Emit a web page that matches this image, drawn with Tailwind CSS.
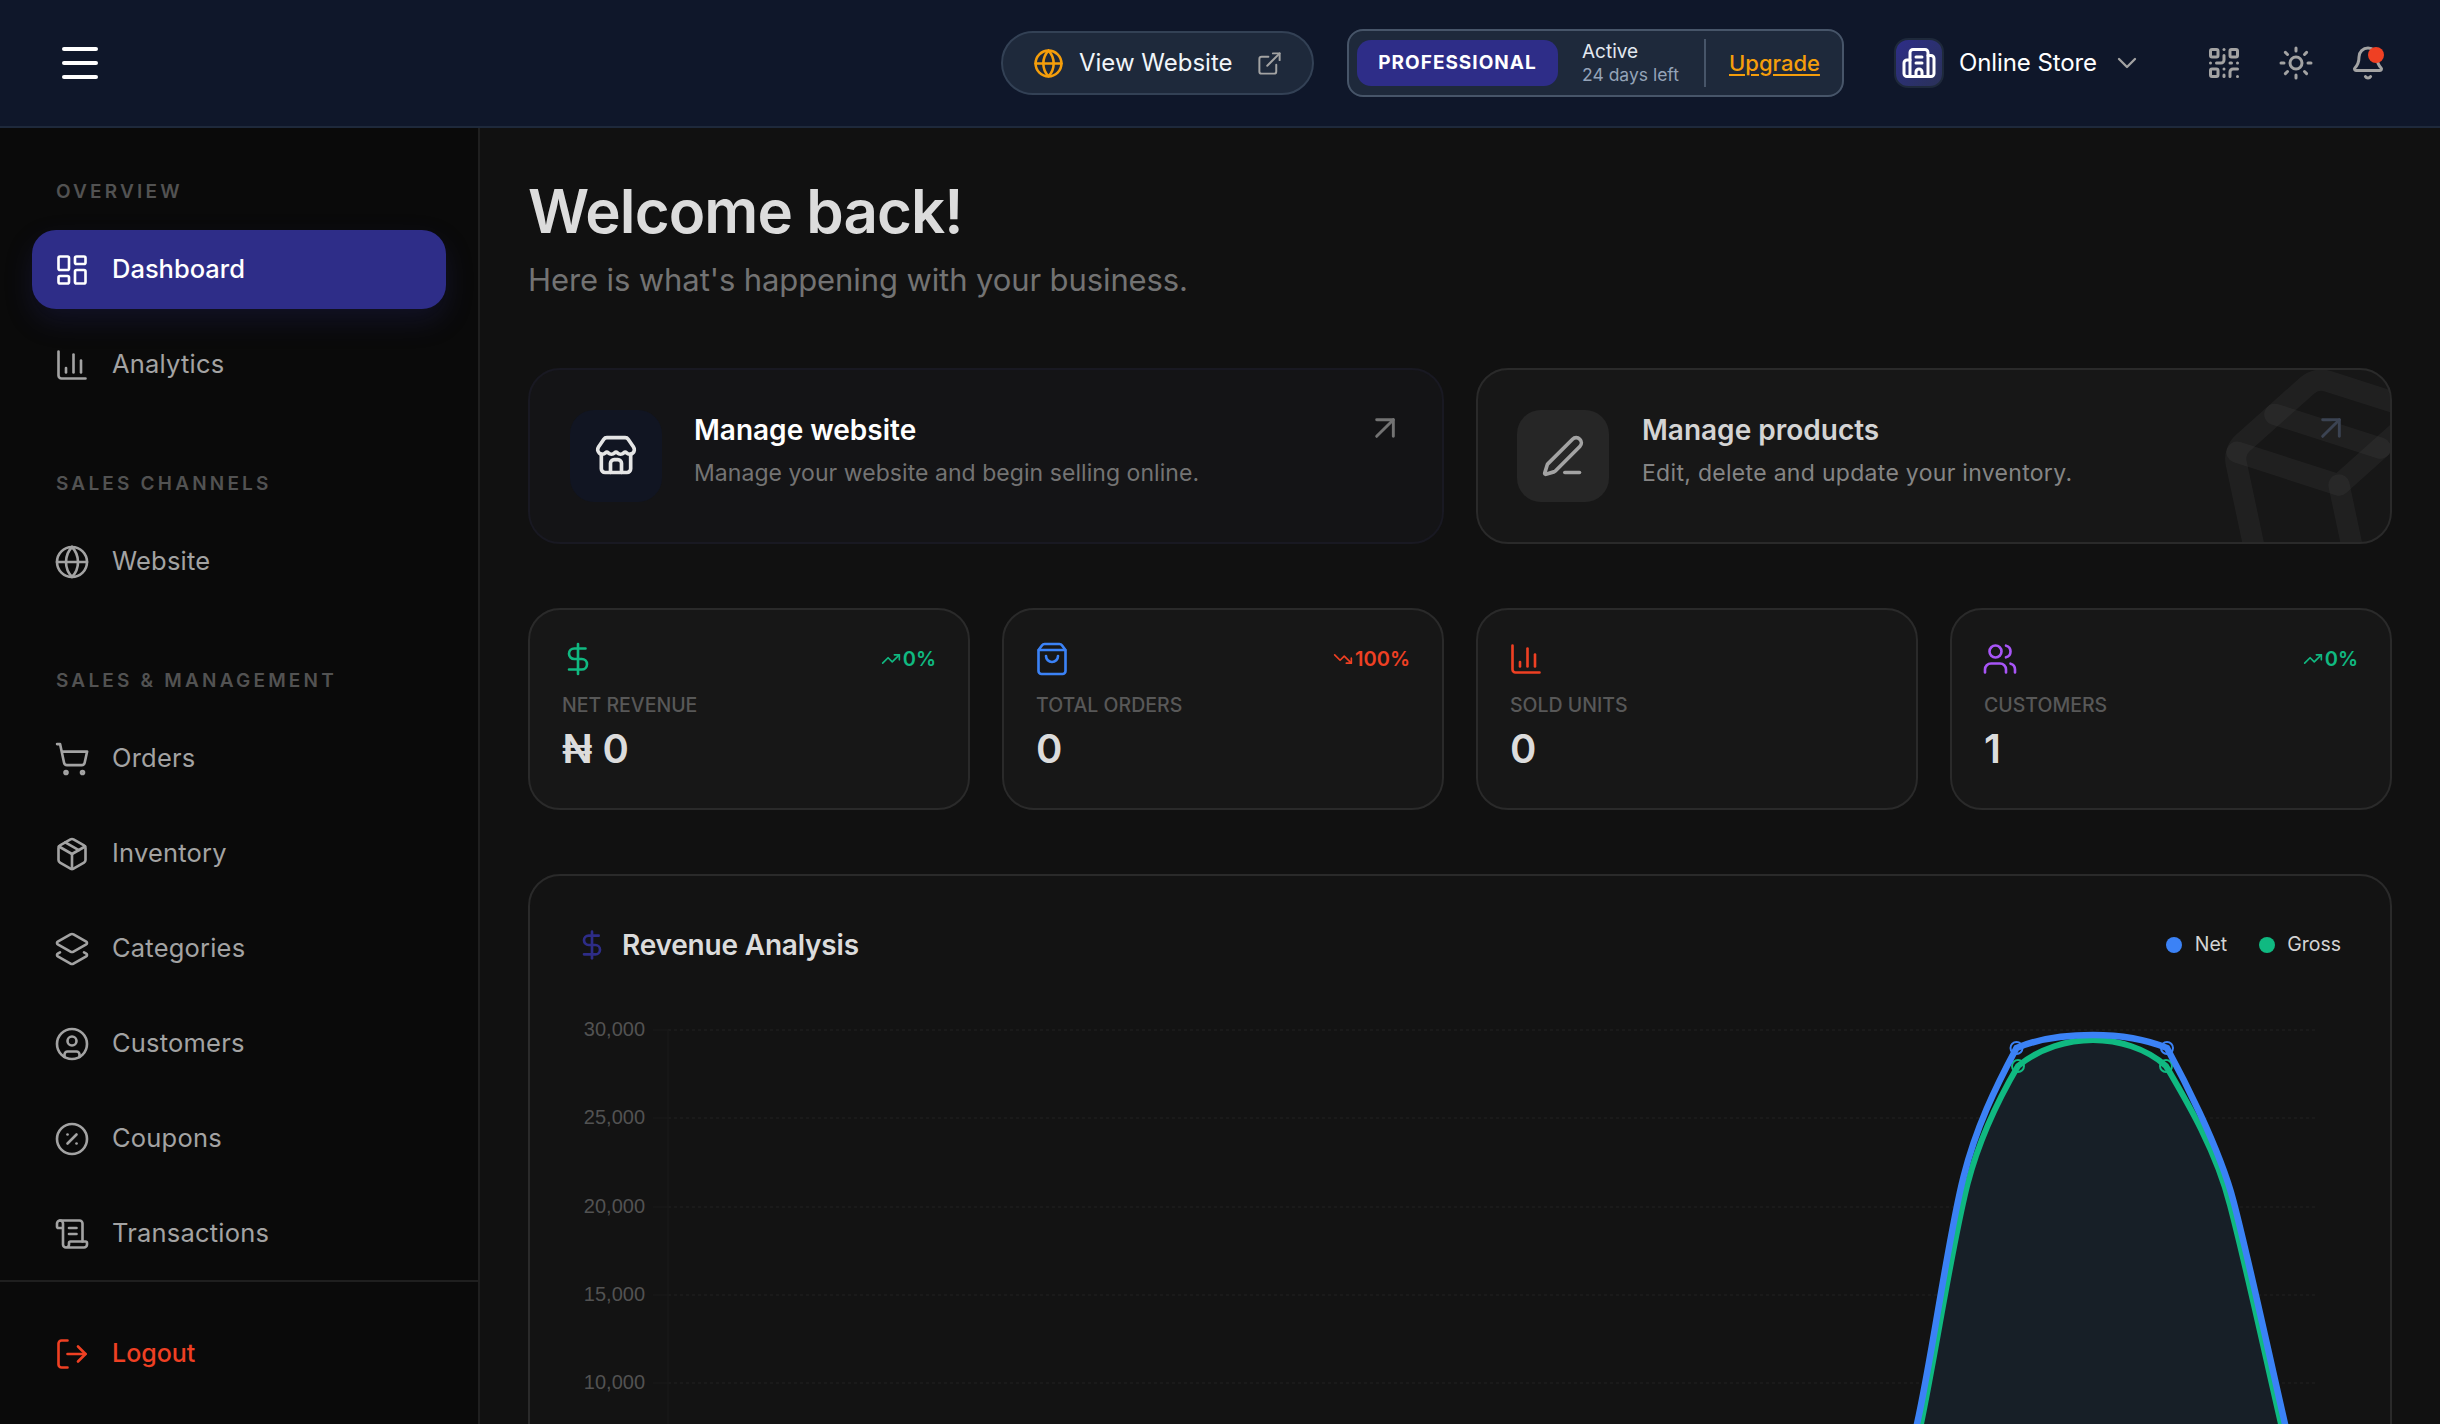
<!DOCTYPE html>
<html lang="en">
<head>
<meta charset="utf-8">
<title>Dashboard</title>
<script src="https://cdn.jsdelivr.net/npm/@tailwindcss/browser@4"></script>
</head>
<body class="h-[1424px] overflow-hidden bg-[#111111] font-['Inter',sans-serif]">

<!-- top bar -->
<header class="flex h-[128px] items-center border-b-2 border-[#1e293b] bg-[#0f172a] pl-[62px] pr-[54px]">
  <button class="flex h-[32px] w-[36px] flex-col justify-between">
    <span class="block h-[4px] w-full rounded-full bg-white"></span>
    <span class="block h-[4px] w-full rounded-full bg-white"></span>
    <span class="block h-[4px] w-full rounded-full bg-white"></span>
  </button>

  <a class="ml-auto flex h-[64px] w-[313px] items-center rounded-full border-2 border-[#334155] bg-[#1e293b] pl-[30px] text-[24px] text-[#f1f5f9]">
    <svg class="h-[31px] w-[31px] text-[#f59e0b]" viewBox="0 0 24 24" fill="none" stroke="currentColor" stroke-width="2" stroke-linecap="round" stroke-linejoin="round"><circle cx="12" cy="12" r="10"/><path d="M12 2a14.5 14.5 0 0 0 0 20 14.5 14.5 0 0 0 0-20"/><path d="M2 12h20"/></svg>
    <span class="ml-[15px] w-[153px] whitespace-nowrap">View Website</span>
    <svg class="ml-[24px] h-[27px] w-[27px] text-[#a3a3a3]" viewBox="0 0 24 24" fill="none" stroke="currentColor" stroke-width="1.75" stroke-linecap="round" stroke-linejoin="round"><path d="M15 3h6v6"/><path d="M10 14 21 3"/><path d="M18 13v6a2 2 0 0 1-2 2H5a2 2 0 0 1-2-2V8a2 2 0 0 1 2-2h6"/></svg>
  </a>

  <div class="ml-[33px] flex h-[68px] w-[497px] items-center rounded-[16px] border-2 border-[#475569] bg-[#1e293b] pl-[8px]">
    <span class="flex h-[46px] w-[201px] items-center justify-center rounded-[14px] bg-[#2e2d88] text-[19px] font-bold tracking-[1px] text-white">PROFESSIONAL</span>
    <div class="ml-[24px] w-[122px] leading-[23px]">
      <div class="text-[19px] text-[#e2e8f0]">Active</div>
      <div class="whitespace-nowrap text-[17.5px] text-[#94a3b8]">24 days left</div>
    </div>
    <span class="h-[48px] w-[2px] bg-[#475569]"></span>
    <a class="ml-[23px] text-[22px] font-medium text-[#f59e0b] underline underline-offset-3">Upgrade</a>
  </div>

  <div class="ml-[50px] flex items-center">
    <span class="flex h-[50px] w-[50px] items-center justify-center rounded-[14px] border-2 border-[#1e293b] bg-gradient-to-br from-[#2e2d88] to-[#2a3158]">
      <svg class="h-[36px] w-[36px] shrink-0 text-white" viewBox="0 0 24 24" fill="none" stroke="currentColor" stroke-width="2" stroke-linecap="round" stroke-linejoin="round"><path d="M10 12h4"/><path d="M10 8h4"/><path d="M14 21v-3a2 2 0 0 0-4 0v3"/><path d="M6 10H4a2 2 0 0 0-2 2v7a2 2 0 0 0 2 2h16a2 2 0 0 0 2-2V9a2 2 0 0 0-2-2h-2"/><path d="M6 21V5a2 2 0 0 1 2-2h8a2 2 0 0 1 2 2v16"/></svg>
    </span>
    <span class="ml-[15px] w-[138px] whitespace-nowrap text-[24px] text-white tracking-[-0.1px]">Online Store</span>
    <svg class="ml-[14px] h-[32px] w-[32px] text-[#a3a3a3]" viewBox="0 0 24 24" fill="none" stroke="currentColor" stroke-width="1.75" stroke-linecap="round" stroke-linejoin="round"><path d="m6 9 6 6 6-6"/></svg>
  </div>

  <svg class="ml-[63px] h-[36px] w-[36px] text-[#a3a3a3]" viewBox="0 0 24 24" fill="none" stroke="currentColor" stroke-width="2" stroke-linecap="round" stroke-linejoin="round"><rect width="5" height="5" x="3" y="3" rx="1"/><rect width="5" height="5" x="16" y="3" rx="1"/><rect width="5" height="5" x="3" y="16" rx="1"/><path d="M21 16h-3a2 2 0 0 0-2 2v3"/><path d="M21 21v.01"/><path d="M12 7v3a2 2 0 0 1-2 2H7"/><path d="M3 12h.01"/><path d="M12 3h.01"/><path d="M12 16v.01"/><path d="M16 12h1"/><path d="M21 12v.01"/><path d="M12 21v-1"/></svg>
  <svg class="ml-[36px] h-[36px] w-[36px] text-[#a3a3a3]" viewBox="0 0 24 24" fill="none" stroke="currentColor" stroke-width="2" stroke-linecap="round" stroke-linejoin="round"><circle cx="12" cy="12" r="4"/><path d="M12 2v2"/><path d="M12 20v2"/><path d="m4.93 4.93 1.41 1.41"/><path d="m17.66 17.66 1.41 1.41"/><path d="M2 12h2"/><path d="M20 12h2"/><path d="m6.34 17.66-1.41 1.41"/><path d="m19.07 4.93-1.41 1.41"/></svg>
  <div class="relative ml-[36px] h-[36px] w-[36px]">
    <svg class="h-[36px] w-[36px] text-[#a3a3a3]" viewBox="0 0 24 24" fill="none" stroke="currentColor" stroke-width="2" stroke-linecap="round" stroke-linejoin="round"><path d="M10.268 21a2 2 0 0 0 3.464 0"/><path d="M3.262 15.326A1 1 0 0 0 4 17h16a1 1 0 0 0 .74-1.673C19.41 13.956 18 12.499 18 8A6 6 0 0 0 6 8c0 4.499-1.411 5.956-2.738 7.326"/></svg>
    <span class="absolute right-[2px] top-[2px] h-[16px] w-[16px] rounded-full bg-[#ef4023]"></span>
  </div>
</header>

<div class="flex h-[1296px]">
  <!-- sidebar -->
  <aside class="flex w-[480px] shrink-0 flex-col border-r-2 border-[#1f1f1f] bg-[#0a0a0a] text-[25.5px] tracking-[0.2px] text-[#a3a3a3]">
    <nav class="h-[1152px] px-[32px] pt-[49px]">
      <div class="pl-[24px] text-[19px] font-semibold leading-[30px] tracking-[3.2px] text-[#525252]">OVERVIEW</div>
      <div class="mt-[23px] flex flex-col gap-[16px]">
        <a class="flex h-[79px] items-center gap-[22px] rounded-[24px] bg-[#2e2d88] px-[22px] font-medium tracking-normal text-white shadow-[0_12px_28px_rgba(46,45,136,0.22)]">
          <svg class="h-[36px] w-[36px]" viewBox="0 0 24 24" fill="none" stroke="currentColor" stroke-width="1.75" stroke-linecap="round" stroke-linejoin="round"><rect width="7" height="9" x="3" y="3" rx="1"/><rect width="7" height="5" x="14" y="3" rx="1"/><rect width="7" height="9" x="14" y="12" rx="1"/><rect width="7" height="5" x="3" y="16" rx="1"/></svg>
          Dashboard
        </a>
        <a class="flex h-[79px] items-center gap-[22px] px-[22px]">
          <svg class="h-[36px] w-[36px]" viewBox="0 0 24 24" fill="none" stroke="currentColor" stroke-width="1.75" stroke-linecap="round" stroke-linejoin="round"><path d="M3 3v16a2 2 0 0 0 2 2h16"/><path d="M18 17V9"/><path d="M13 17V5"/><path d="M8 17v-3"/></svg>
          Analytics
        </a>
      </div>

      <div class="mt-[65px] pl-[24px] text-[19px] font-semibold leading-[30px] tracking-[3.2px] text-[#525252]">SALES CHANNELS</div>
      <div class="mt-[23px] flex flex-col gap-[16px]">
        <a class="flex h-[79px] items-center gap-[22px] px-[22px]">
          <svg class="h-[36px] w-[36px]" viewBox="0 0 24 24" fill="none" stroke="currentColor" stroke-width="1.75" stroke-linecap="round" stroke-linejoin="round"><circle cx="12" cy="12" r="10"/><path d="M12 2a14.5 14.5 0 0 0 0 20 14.5 14.5 0 0 0 0-20"/><path d="M2 12h20"/></svg>
          Website
        </a>
      </div>

      <div class="mt-[65px] pl-[24px] text-[19px] font-semibold leading-[30px] tracking-[3.2px] text-[#525252]">SALES &amp; MANAGEMENT</div>
      <div class="mt-[23px] flex flex-col gap-[16px]">
        <a class="flex h-[79px] items-center gap-[22px] px-[22px]">
          <svg class="h-[36px] w-[36px]" viewBox="0 0 24 24" fill="none" stroke="currentColor" stroke-width="1.75" stroke-linecap="round" stroke-linejoin="round"><circle cx="8" cy="21" r="1"/><circle cx="19" cy="21" r="1"/><path d="M2.05 2.05h2l2.66 12.42a2 2 0 0 0 2 1.58h9.78a2 2 0 0 0 1.95-1.57l1.65-7.43H5.12"/></svg>
          Orders
        </a>
        <a class="flex h-[79px] items-center gap-[22px] px-[22px]">
          <svg class="h-[36px] w-[36px]" viewBox="0 0 24 24" fill="none" stroke="currentColor" stroke-width="1.75" stroke-linecap="round" stroke-linejoin="round"><path d="M11 21.73a2 2 0 0 0 2 0l7-4A2 2 0 0 0 21 16V8a2 2 0 0 0-1-1.73l-7-4a2 2 0 0 0-2 0l-7 4A2 2 0 0 0 3 8v8a2 2 0 0 0 1 1.73z"/><path d="M12 22V12"/><path d="M3.29 7 12 12l8.71-5"/><path d="m7.5 4.27 9 5.15"/></svg>
          Inventory
        </a>
        <a class="flex h-[79px] items-center gap-[22px] px-[22px]">
          <svg class="h-[36px] w-[36px]" viewBox="0 0 24 24" fill="none" stroke="currentColor" stroke-width="1.75" stroke-linecap="round" stroke-linejoin="round"><path d="M13 13.74a2 2 0 0 1-2 0L2.5 8.87a1 1 0 0 1 0-1.74L11 2.26a2 2 0 0 1 2 0l8.5 4.87a1 1 0 0 1 0 1.74z"/><path d="m20 14.285 1.5.845a1 1 0 0 1 0 1.74L13 21.74a2 2 0 0 1-2 0l-8.5-4.87a1 1 0 0 1 0-1.74l1.5-.845"/></svg>
          Categories
        </a>
        <a class="flex h-[79px] items-center gap-[22px] px-[22px]">
          <svg class="h-[36px] w-[36px]" viewBox="0 0 24 24" fill="none" stroke="currentColor" stroke-width="1.75" stroke-linecap="round" stroke-linejoin="round"><circle cx="12" cy="12" r="10"/><circle cx="12" cy="10" r="3"/><path d="M7 20.662V19a2 2 0 0 1 2-2h6a2 2 0 0 1 2 2v1.662"/></svg>
          Customers
        </a>
        <a class="flex h-[79px] items-center gap-[22px] px-[22px]">
          <svg class="h-[36px] w-[36px]" viewBox="0 0 24 24" fill="none" stroke="currentColor" stroke-width="1.75" stroke-linecap="round" stroke-linejoin="round"><circle cx="12" cy="12" r="10"/><path d="m15 9-6 6"/><path d="M9 9h.01"/><path d="M15 15h.01"/></svg>
          Coupons
        </a>
        <a class="flex h-[79px] items-center gap-[22px] px-[22px]">
          <svg class="h-[36px] w-[36px]" viewBox="0 0 24 24" fill="none" stroke="currentColor" stroke-width="1.75" stroke-linecap="round" stroke-linejoin="round"><path d="M15 12h-5"/><path d="M15 8h-5"/><path d="M19 17V5a2 2 0 0 0-2-2H4"/><path d="M8 21h12a2 2 0 0 0 2-2v-1a1 1 0 0 0-1-1H11a1 1 0 0 0-1 1v1a2 2 0 1 1-4 0V5a2 2 0 1 0-4 0v2a1 1 0 0 0 1 1h3"/></svg>
          Transactions
        </a>
      </div>
    </nav>
    <div class="border-t-2 border-[#1f1f1f] px-[32px] pt-[32px]">
      <a class="flex h-[79px] items-center gap-[22px] px-[22px] text-[25px] font-medium tracking-normal text-[#ef4023]">
        <svg class="h-[36px] w-[36px]" viewBox="0 0 24 24" fill="none" stroke="currentColor" stroke-width="1.75" stroke-linecap="round" stroke-linejoin="round"><path d="M9 21H5a2 2 0 0 1-2-2V5a2 2 0 0 1 2-2h4"/><path d="m16 17 5-5-5-5"/><path d="M21 12H9"/></svg>
        Logout
      </a>
    </div>
  </aside>

  <!-- main column -->
  <main class="min-w-0 flex-1 px-[48px] pt-[48px]">
    <h1 class="mt-[-1px] text-[60px] font-semibold leading-[72px] tracking-[-0.9px] text-[#dcdcdc]">Welcome back!</h1>
    <p class="mt-[10px] text-[31px] leading-[46px] tracking-[-0.1px] text-[#737373]">Here is what's happening with your business.</p>

    <div class="mt-[65px] grid grid-cols-2 gap-[32px]">
      <a class="relative flex h-[176px] items-center overflow-hidden rounded-[32px] border-2 border-[#191922] bg-[#141416] pl-[40px]">
        <span class="flex h-[92px] w-[92px] shrink-0 items-center justify-center rounded-[24px] bg-[#111522]">
          <svg class="h-[44px] w-[44px] text-[#e5e5e5]" viewBox="0 0 24 24" fill="none" stroke="currentColor" stroke-width="2" stroke-linecap="round" stroke-linejoin="round"><path d="M15 21v-5a2 2 0 0 0-2-2h-2a2 2 0 0 0-2 2v5"/><path d="M17.774 10.31a1.12 1.12 0 0 0-1.549 0 2.5 2.5 0 0 1-3.451 0 1.12 1.12 0 0 0-1.548 0 2.5 2.5 0 0 1-3.452 0 1.12 1.12 0 0 0-1.549 0 2.5 2.5 0 0 1-3.77-3.248l2.889-4.184A2 2 0 0 1 7 2h10a2 2 0 0 1 1.653.873l2.895 4.192a2.5 2.5 0 0 1-3.774 3.244"/><path d="M4 10.95V19a2 2 0 0 0 2 2h12a2 2 0 0 0 2-2v-8.05"/></svg>
        </span>
        <div class="mb-[13px] ml-[32px]">
          <div class="text-[28px] font-semibold leading-[40px] text-white">Manage website</div>
          <div class="mt-[6px] whitespace-nowrap text-[23px] leading-[34px] tracking-[0.05px] text-[#737373]">Manage your website and begin selling online.</div>
        </div>
        <svg class="absolute right-[37px] top-[38px] h-[40px] w-[40px] text-[#737373]" viewBox="0 0 24 24" fill="none" stroke="currentColor" stroke-width="1.75" stroke-linecap="round" stroke-linejoin="round"><path d="M7 7h10v10"/><path d="M7 17 17 7"/></svg>
      </a>

      <a class="relative flex h-[176px] items-center overflow-hidden rounded-[32px] border-2 border-[#2a2a2a] bg-[#171717] pl-[39px]">
        <svg class="absolute right-[-77px] top-[-13px] h-[256px] w-[256px] -rotate-12 text-white/[0.04]" viewBox="0 0 24 24" fill="none" stroke="currentColor" stroke-width="2" stroke-linecap="round" stroke-linejoin="round"><path d="M11 21.73a2 2 0 0 0 2 0l7-4A2 2 0 0 0 21 16V8a2 2 0 0 0-1-1.73l-7-4a2 2 0 0 0-2 0l-7 4A2 2 0 0 0 3 8v8a2 2 0 0 0 1 1.73z"/><path d="M12 22V12"/><path d="M3.29 7 12 12l8.71-5"/><path d="m7.5 4.27 9 5.15"/></svg>
        <span class="relative flex h-[92px] w-[92px] shrink-0 items-center justify-center rounded-[24px] bg-[#262626]">
          <svg class="h-[44px] w-[44px] text-[#a3a3a3]" viewBox="0 0 24 24" fill="none" stroke="currentColor" stroke-width="2" stroke-linecap="round" stroke-linejoin="round"><path d="M13 21h8"/><path d="M21.174 6.812a1 1 0 0 0-3.986-3.987L3.842 16.174a2 2 0 0 0-.5.83l-1.321 4.352a.5.5 0 0 0 .623.622l4.353-1.32a2 2 0 0 0 .83-.497z"/></svg>
        </span>
        <div class="relative mb-[13px] ml-[33px]">
          <div class="text-[28px] font-semibold leading-[40px] text-[#d4d4d4]">Manage products</div>
          <div class="mt-[6px] whitespace-nowrap text-[23px] leading-[34px] tracking-[0.3px] text-[#858585]">Edit, delete and update your inventory.</div>
        </div>
        <svg class="absolute right-[39px] top-[38px] h-[40px] w-[40px] text-[#3b4352]" viewBox="0 0 24 24" fill="none" stroke="currentColor" stroke-width="1.75" stroke-linecap="round" stroke-linejoin="round"><path d="M7 7h10v10"/><path d="M7 17 17 7"/></svg>
      </a>
    </div>

    <div class="mt-[64px] grid grid-cols-4 gap-[32px]">
      <div class="h-[202px] rounded-[32px] border-2 border-[#2a2a2a] bg-[#171717] px-[32px] pt-[32px]">
        <div class="flex h-[34px] items-center justify-between">
          <svg class="ml-[-2px] h-[36px] w-[36px] text-[#10b981]" viewBox="0 0 24 24" fill="none" stroke="currentColor" stroke-width="1.75" stroke-linecap="round" stroke-linejoin="round"><path d="M12 2v20"/><path d="M17 5H9.5a3.5 3.5 0 0 0 0 7h5a3.5 3.5 0 0 1 0 7H6"/></svg>
          <span class="flex items-center gap-[2px] text-[20px] font-semibold text-[#10b981]">
            <svg class="h-[20px] w-[20px]" viewBox="0 0 24 24" fill="none" stroke="currentColor" stroke-width="2" stroke-linecap="round" stroke-linejoin="round"><path d="m22 7-8.5 8.5-5-5L2 17"/><path d="M16 7h6v6"/></svg>
            0%
          </span>
        </div>
        <div class="mt-[15px] text-[19.5px] font-medium leading-[28px] text-[#585858]">NET REVENUE</div>
        <div class="mt-[6px] text-[40px] font-semibold leading-[48px] text-[#dcdcdc]">₦ 0</div>
      </div>

      <div class="h-[202px] rounded-[32px] border-2 border-[#2a2a2a] bg-[#171717] px-[32px] pt-[32px]">
        <div class="flex h-[34px] items-center justify-between">
          <svg class="ml-[-2px] h-[36px] w-[36px] text-[#3b82f6]" viewBox="0 0 24 24" fill="none" stroke="currentColor" stroke-width="1.75" stroke-linecap="round" stroke-linejoin="round"><path d="M16 10a4 4 0 0 1-8 0"/><path d="M3.103 6.034h17.794"/><path d="M3.4 5.467a2 2 0 0 0-.4 1.2V20a2 2 0 0 0 2 2h14a2 2 0 0 0 2-2V6.667a2 2 0 0 0-.4-1.2l-2-2.667A2 2 0 0 0 17 2H7a2 2 0 0 0-1.6.8z"/></svg>
          <span class="flex items-center gap-[2px] text-[20px] font-semibold text-[#ef4023]">
            <svg class="h-[20px] w-[20px]" viewBox="0 0 24 24" fill="none" stroke="currentColor" stroke-width="2" stroke-linecap="round" stroke-linejoin="round"><path d="m22 17-8.5-8.5-5 5L2 7"/><path d="M16 17h6v-6"/></svg>
            100%
          </span>
        </div>
        <div class="mt-[15px] text-[19.5px] font-medium leading-[28px] text-[#585858]">TOTAL ORDERS</div>
        <div class="mt-[6px] text-[40px] font-semibold leading-[48px] text-[#dcdcdc]">0</div>
      </div>

      <div class="h-[202px] rounded-[32px] border-2 border-[#2a2a2a] bg-[#171717] px-[32px] pt-[32px]">
        <div class="flex h-[34px] items-center justify-between">
          <svg class="ml-[-2px] h-[36px] w-[36px] text-[#ef4023]" viewBox="0 0 24 24" fill="none" stroke="currentColor" stroke-width="1.75" stroke-linecap="round" stroke-linejoin="round"><path d="M3 3v16a2 2 0 0 0 2 2h16"/><path d="M18 17V9"/><path d="M13 17V5"/><path d="M8 17v-3"/></svg>
        </div>
        <div class="mt-[15px] text-[19.5px] font-medium leading-[28px] text-[#585858]">SOLD UNITS</div>
        <div class="mt-[6px] text-[40px] font-semibold leading-[48px] text-[#dcdcdc]">0</div>
      </div>

      <div class="h-[202px] rounded-[32px] border-2 border-[#2a2a2a] bg-[#171717] px-[32px] pt-[32px]">
        <div class="flex h-[34px] items-center justify-between">
          <svg class="ml-[-2px] h-[36px] w-[36px] text-[#a855f7]" viewBox="0 0 24 24" fill="none" stroke="currentColor" stroke-width="1.75" stroke-linecap="round" stroke-linejoin="round"><path d="M16 21v-2a4 4 0 0 0-4-4H6a4 4 0 0 0-4 4v2"/><circle cx="9" cy="7" r="4"/><path d="M22 21v-2a4 4 0 0 0-3-3.87"/><path d="M16 3.13a4 4 0 0 1 0 7.75"/></svg>
          <span class="flex items-center gap-[2px] text-[20px] font-semibold text-[#10b981]">
            <svg class="h-[20px] w-[20px]" viewBox="0 0 24 24" fill="none" stroke="currentColor" stroke-width="2" stroke-linecap="round" stroke-linejoin="round"><path d="m22 7-8.5 8.5-5-5L2 17"/><path d="M16 7h6v6"/></svg>
            0%
          </span>
        </div>
        <div class="mt-[15px] text-[19.5px] font-medium leading-[28px] text-[#585858]">CUSTOMERS</div>
        <div class="mt-[6px] text-[40px] font-semibold leading-[48px] text-[#dcdcdc]">1</div>
      </div>
    </div>

    <!-- revenue chart, runs off the bottom of the window -->
    <section class="mt-[64px] h-[640px] rounded-[32px] border-2 border-[#2a2a2a] bg-[#131313]">
      <div class="flex h-[137px] items-center justify-between pl-[46px] pr-[49px]">
        <div class="flex items-center gap-[14px]">
          <svg class="h-[32px] w-[32px] text-[#2e2d88]" viewBox="0 0 24 24" fill="none" stroke="currentColor" stroke-width="2" stroke-linecap="round" stroke-linejoin="round"><path d="M12 2v20"/><path d="M17 5H9.5a3.5 3.5 0 0 0 0 7h5a3.5 3.5 0 0 1 0 7H6"/></svg>
          <h2 class="text-[28px] font-semibold tracking-[-0.2px] text-[#dcdcdc]">Revenue Analysis</h2>
        </div>
        <div class="flex items-center text-[19.5px] text-[#d4d4d4]">
          <span class="h-[16px] w-[16px] rounded-full bg-[#3b82f6]"></span>
          <span class="ml-[13px]">Net</span>
          <span class="ml-[32px] h-[16px] w-[16px] rounded-full bg-[#10b981]"></span>
          <span class="ml-[12px]">Gross</span>
        </div>
      </div>
      <svg class="block h-[440px] w-[1860px]" viewBox="530 1013 1860 440" fill="none">
        <g stroke="#1e1e1e" stroke-width="1.5" stroke-dasharray="3 3">
          <path d="M668 1030H2317"/><path d="M668 1118H2317"/><path d="M668 1207H2317"/><path d="M668 1295H2317"/><path d="M668 1383H2317"/>
        </g>
        <g stroke="#191919" stroke-width="1.5">
          <path d="M668 1030V1453"/><path d="M653 1030H668"/><path d="M653 1118H668"/><path d="M653 1207H668"/><path d="M653 1295H668"/><path d="M653 1383H668"/>
        </g>
        <g class="font-['Liberation_Sans',sans-serif]" fill="#525252" font-size="20" text-anchor="end">
          <text x="645" y="1036">30,000</text>
          <text x="645" y="1124">25,000</text>
          <text x="645" y="1213">20,000</text>
          <text x="645" y="1301">15,000</text>
          <text x="645" y="1389">10,000</text>
        </g>
        <path fill="#171f27" d="M1915 1453L1921 1424C1936 1352 1952 1245 1967.5 1184C1979 1140 1998 1100 2018 1066C2040 1048 2068 1040 2093 1040C2118 1040 2146 1048 2166 1066C2186 1100 2216 1150 2230 1205C2245 1262 2264 1350 2281 1424L2287 1453Z"/>
        <path stroke="#10b981" stroke-width="6" d="M1915 1453L1921 1424C1936 1352 1952 1245 1967.5 1184C1979 1140 1998 1100 2018 1066C2040 1048 2068 1040 2093 1040C2118 1040 2146 1048 2166 1066C2186 1100 2216 1150 2230 1205C2245 1262 2264 1350 2281 1424L2287 1453"/>
        <g stroke="#10b981" stroke-width="2"><circle cx="2018" cy="1066" r="6"/><circle cx="2166" cy="1066" r="6"/></g>
        <path stroke="#3b82f6" stroke-width="6.5" d="M1911 1453L1917 1424C1932.5 1355 1948.1 1237 1963.6 1176.5C1976 1128 1995 1088 2016.5 1048C2040 1038 2070 1035 2093 1035C2120 1035 2145 1039 2167 1048C2180 1072 2219 1146 2233.6 1201.7C2248.6 1259 2268 1350 2285 1424L2291 1453"/>
        <g stroke="#3b82f6" stroke-width="2"><circle cx="2016.5" cy="1048" r="6"/><circle cx="2167" cy="1048" r="6"/></g>
      </svg>
    </section>
  </main>
</div>

</body>
</html>
